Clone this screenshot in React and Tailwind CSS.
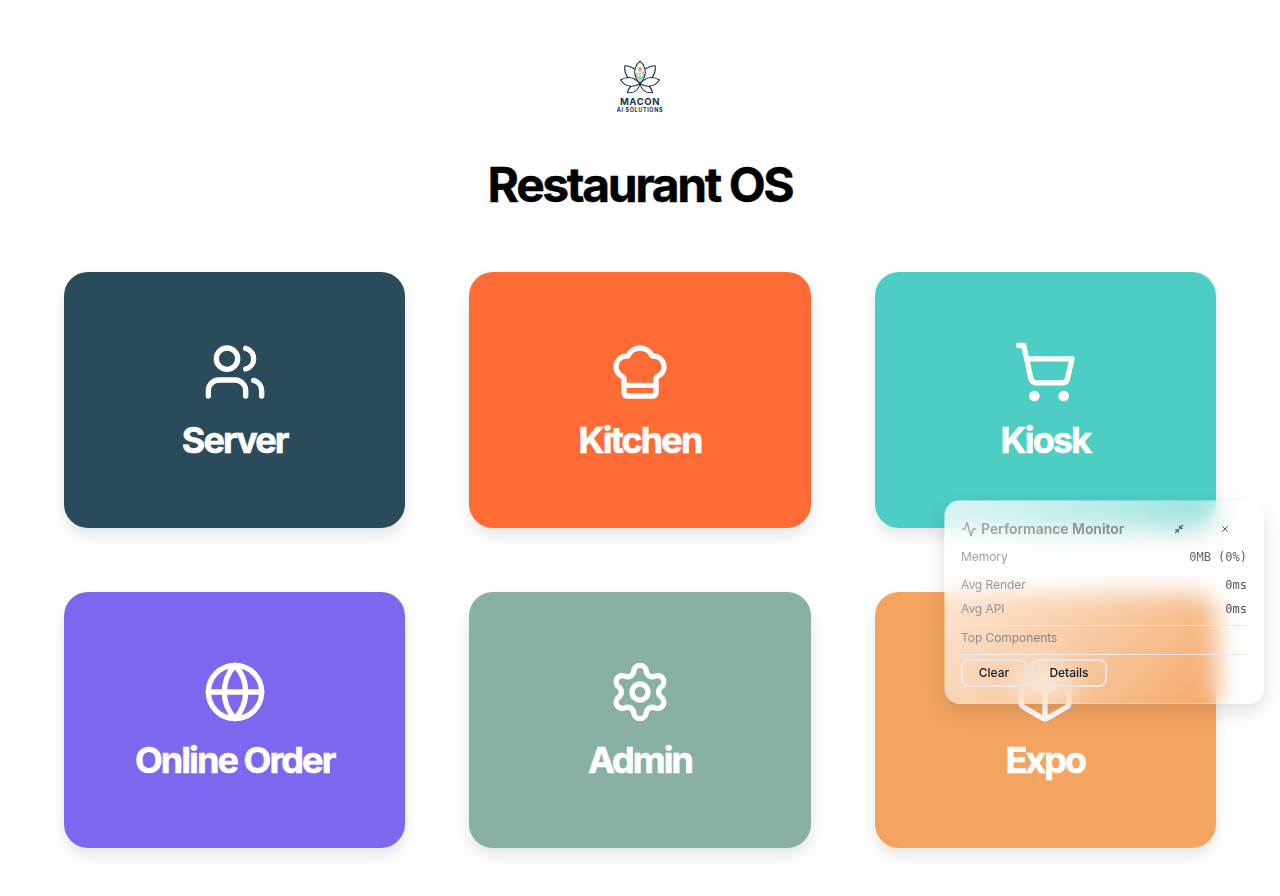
import React from "react";
import { Users, ChefHat, ShoppingCart, Globe, Settings, Package, Activity, Minimize2, X } from "lucide-react";

const tiles = [
  { label: "Server", Icon: Users, color: "bg-[#2A4B5C]" },
  { label: "Kitchen", Icon: ChefHat, color: "bg-[#FF6B35]" },
  { label: "Kiosk", Icon: ShoppingCart, color: "bg-[#4ECDC4]" },
  { label: "Online Order", Icon: Globe, color: "bg-[#7B68EE]" },
  { label: "Admin", Icon: Settings, color: "bg-[#88B0A4]" },
  { label: "Expo", Icon: Package, color: "bg-[#F4A460]" },
];

function Logo() {
  return (
    <div className="flex h-16 w-16 flex-col items-center pt-[4px] text-[#1b3349]">
      <svg width="42" height="35" viewBox="0 0 42 35" fill="none" stroke="#1b3349" strokeWidth="1.1" strokeLinejoin="round">
        <path d="M21 1.200C17 5 15.500 8.500 15.700 12.500C16 17 18 20.500 21 23.500C24 20.500 26 17 26.300 12.500C26.500 8.500 25 5 21 1.200Z" />
        <path d="M15.700 9C12.500 6.800 9.500 5.800 5.800 5.800C5.300 11 6.500 15 9.500 18" />
        <path d="M26.300 9C29.500 6.800 32.500 5.800 36.200 5.800C36.700 11 35.500 15 32.500 18" />
        <path d="M21 23.500C15 17 8 16 1.500 20C6.500 27 14 28 21 23.500Z" />
        <path d="M21 23.500C27 17 34 16 40.500 20C35.500 27 28 28 21 23.500Z" />
        <path d="M12 26C10 28 9 30 8.500 32.500C14.500 33.500 19.500 30.500 21 23.500" />
        <path d="M30 26C32 28 33 30 33.500 32.500C27.500 33.500 22.500 30.500 21 23.500" />
        <path d="M21 22V10M21 19.500L18 16.500V13.500M21 19.500L24.300 16.500V12.500" stroke="#7cc5a8" />
        <circle cx="21" cy="9" r="2" fill="#f5936b" stroke="none" />
        <circle cx="18" cy="14" r="1.200" fill="#f5b08b" stroke="none" />
        <circle cx="24.200" cy="12.500" r="1.200" fill="#f5b08b" stroke="none" />
      </svg>
      <div className="mt-[2px] text-[9.5px] leading-[9px] font-bold tracking-[0.6px]">MACON</div>
      <div className="mt-[1px] text-[5.5px] leading-[6px] font-bold tracking-[0.6px] whitespace-nowrap">AI SOLUTIONS</div>
    </div>
  );
}

function Tile({ label, Icon, color }) {
  return (
    <button className={`flex h-64 flex-col items-center justify-center rounded-3xl text-white shadow-[0_8px_16px_rgba(0,0,0,0.1)] ${color}`}>
      <Icon className="mb-4 h-16 w-16" strokeWidth={2} />
      <span className="text-4xl leading-10 font-bold tracking-[-0.053em] [-webkit-text-stroke:0.6px_white]">{label}</span>
    </button>
  );
}

function Metric({ label, value }) {
  return (
    <div className="flex h-4 items-center justify-between text-xs">
      <span className="tracking-[-0.005em] text-[#4d525c]">{label}</span>
      <span className="font-['DejaVu_Sans_Mono',monospace] text-gray-700">{value}</span>
    </div>
  );
}

function PerformanceMonitor() {
  return (
    <div className="fixed top-[500px] right-4 h-[204px] w-80 overflow-hidden rounded-2xl border border-white/20 bg-linear-135 from-white/55 to-white/0 px-4 shadow-[0_8px_20px_rgba(0,0,0,0.12)] backdrop-blur-md">
      <div className="flex h-12 items-center justify-between pt-2">
        <div className="flex items-center gap-1 text-sm font-semibold tracking-[-0.003em] text-[#4d525c]">
          <Activity className="h-4 w-4" />
          Performance Monitor
        </div>
        <div className="relative z-10 -mr-px flex items-center text-gray-700">
          <span className="flex w-[46px] justify-center"><Minimize2 className="h-2.5 w-2.5" strokeWidth={2.5} /></span>
          <span className="flex w-[46px] justify-center"><X className="h-2.5 w-2.5" /></span>
        </div>
      </div>
      <Metric label="Memory" value="0MB (0%)" />
      <div className="mt-3 flex flex-col gap-2">
        <Metric label="Avg Render" value="0ms" />
        <Metric label="Avg API" value="0ms" />
      </div>
      <div className="mt-2 border-y border-gray-200 pt-1 pb-2 text-xs tracking-[-0.005em] text-[#4d525c]">Top Components</div>
      <div className="relative z-10 mt-1 flex gap-1 text-xs font-medium text-gray-900">
        <button className="h-7 w-[66px] rounded-lg border-2 border-gray-200">Clear</button>
        <button className="h-7 w-[76px] rounded-lg border-2 border-gray-200">Details</button>
      </div>
      <div className="pointer-events-none absolute inset-0 bg-linear-135 from-white/55 to-white/0 to-90%" />
    </div>
  );
}

export default function App() {
  return (
    <div className="h-[896px] overflow-hidden bg-white font-[Inter,sans-serif] antialiased">
      <main className="flex flex-col items-center px-16 pt-14">
        <Logo />
        <h1 className="mt-[35px] text-5xl leading-[60px] font-bold tracking-[-0.05em] text-black [-webkit-text-stroke:0.4px_black]">Restaurant OS</h1>
        <div className="mt-[57px] grid w-full grid-cols-3 gap-16">
          {tiles.map((tile) => (
            <Tile key={tile.label} {...tile} />
          ))}
        </div>
      </main>
      <PerformanceMonitor />
    </div>
  );
}
